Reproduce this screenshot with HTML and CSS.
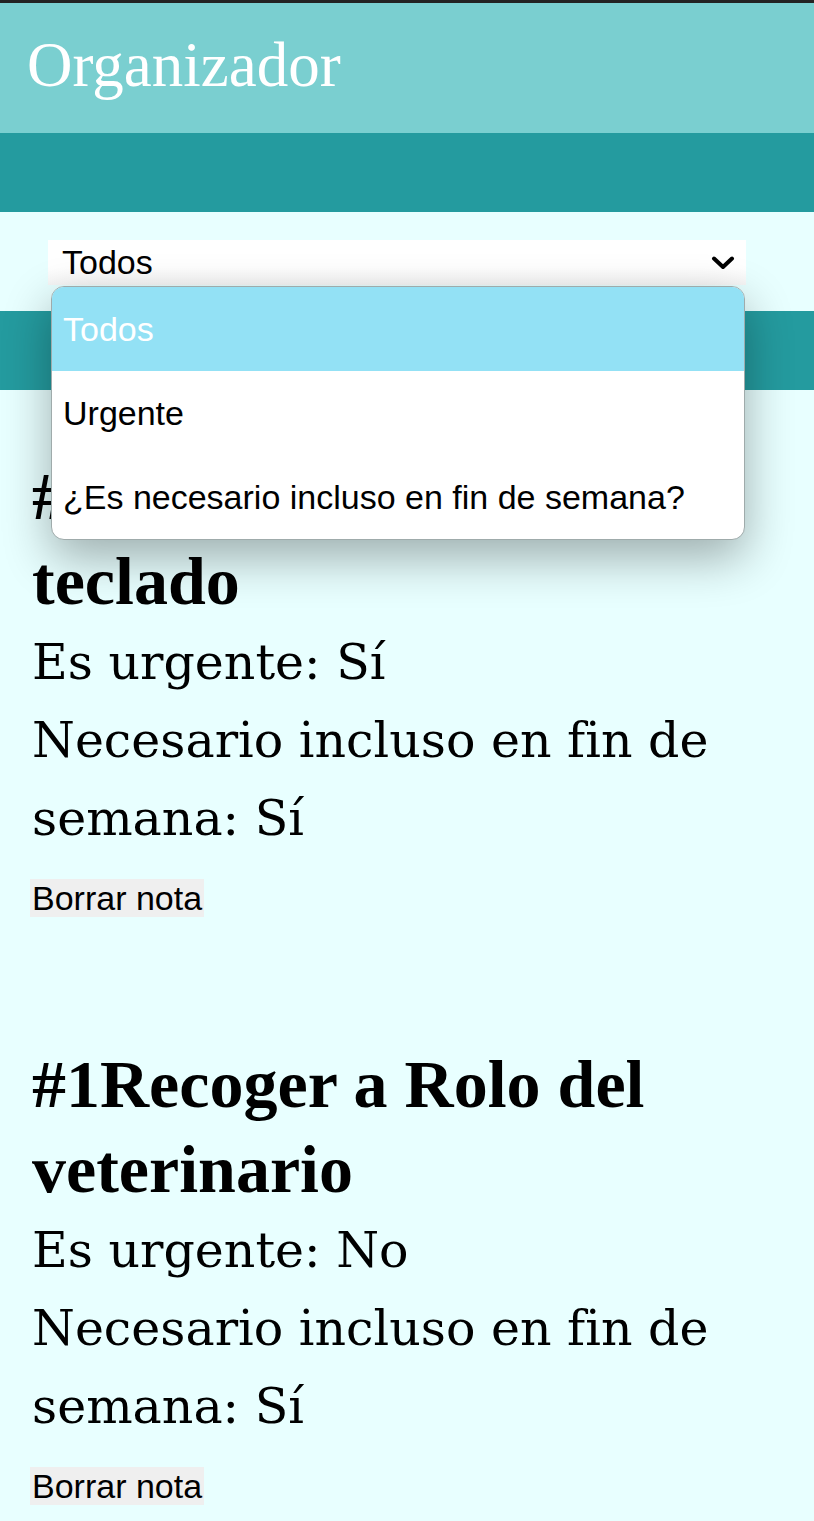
FILE: index.html
```html
<!DOCTYPE html>
<html lang="es">
<head>
<meta charset="utf-8">
<title>Organizador</title>
<link rel="stylesheet" href="styles.css">
</head>
<body>
<header class="top">
  <h1 class="title">Organizador</h1>
</header>
<nav class="bar"></nav>
<section class="filter">
  <div class="select-wrap">
    <div class="select">
      <span class="select-value">Todos</span>
      <svg class="chevron" viewBox="0 0 24 14" width="24" height="14" aria-hidden="true"><path d="M3 2.5 L12 11 L21 2.5" fill="none" stroke="#000" stroke-width="4" stroke-linecap="round" stroke-linejoin="round"/></svg>
    </div>
    <ul class="dropdown">
      <li class="option selected">Todos</li>
      <li class="option">Urgente</li>
      <li class="option">¿Es necesario incluso en fin de semana?</li>
    </ul>
  </div>
</section>
<div class="bar"></div>
<main class="notes">
  <article class="note">
    <h2 class="note-title">#2Comprar un nuevo teclado</h2>
    <p class="note-line">Es urgente: Sí</p>
    <p class="note-line">Necesario incluso en fin de semana: Sí</p>
    <button class="delete">Borrar nota</button>
  </article>
  <article class="note">
    <h2 class="note-title">#1Recoger a Rolo del veterinario</h2>
    <p class="note-line">Es urgente: No</p>
    <p class="note-line">Necesario incluso en fin de semana: Sí</p>
    <button class="delete">Borrar nota</button>
  </article>
</main>
</body>
</html>
```

FILE: styles.css
```css
* { box-sizing: border-box; }

html, body {
  margin: 0;
  padding: 0;
}

body {
  background: #e8ffff;
  border-top: 3px solid #232323;
  font-family: "DejaVu Serif", serif;
  overflow: hidden;
}

.top {
  background: #7acfd0;
  height: 130px;
  padding: 0 0 6px 27px;
}

.title {
  margin: 0;
  font-family: "Liberation Serif", serif;
  font-weight: normal;
  font-size: 63px;
  line-height: 124px;
  color: #ffffff;
}

.bar {
  background: #249b9f;
  height: 79px;
}

.filter {
  padding: 28px 0 26px 48px;
}

.select-wrap {
  position: relative;
  width: 698px;
}

.select {
  height: 45px;
  background: linear-gradient(#ffffff 60%, #f6f6f6);
  display: flex;
  align-items: center;
  justify-content: space-between;
  padding: 0 11px 0 14px;
  font-family: "Liberation Sans", Arial, sans-serif;
  font-size: 34px;
  color: #000;
}

.chevron {
  display: block;
}

.dropdown {
  position: absolute;
  top: 46px;
  left: 3px;
  width: 694px;
  margin: 0;
  padding: 0;
  list-style: none;
  background: #ffffff;
  border: 1px solid #9fabab;
  border-radius: 13px;
  overflow: hidden;
  box-shadow: 0 18px 48px rgba(0, 0, 0, 0.32);
  font-family: "Liberation Sans", Arial, sans-serif;
  font-size: 34px;
  z-index: 5;
}

.option {
  height: 84px;
  line-height: 84px;
  padding-left: 11px;
  color: #000;
}

.option.selected {
  background: #93e1f5;
  color: #ffffff;
}

.notes {
  padding: 64px 32px 40px 32px;
}

.note + .note {
  margin-top: 125px;
}

.note-title {
  margin: 0;
  font-family: "Liberation Serif", serif;
  font-weight: bold;
  font-size: 68px;
  line-height: 85px;
  color: #000;
}

.note-line {
  margin: 0;
  font-family: "DejaVu Serif", serif;
  font-size: 49px;
  line-height: 78px;
  color: #000;
}

.delete {
  display: block;
  margin: 21px 0 0 -2px;
  padding: 1px 2px;
  border: none;
  background: #efefef;
  font-family: "Liberation Sans", Arial, sans-serif;
  font-size: 34px;
  line-height: 36px;
  color: #000;
}
```
